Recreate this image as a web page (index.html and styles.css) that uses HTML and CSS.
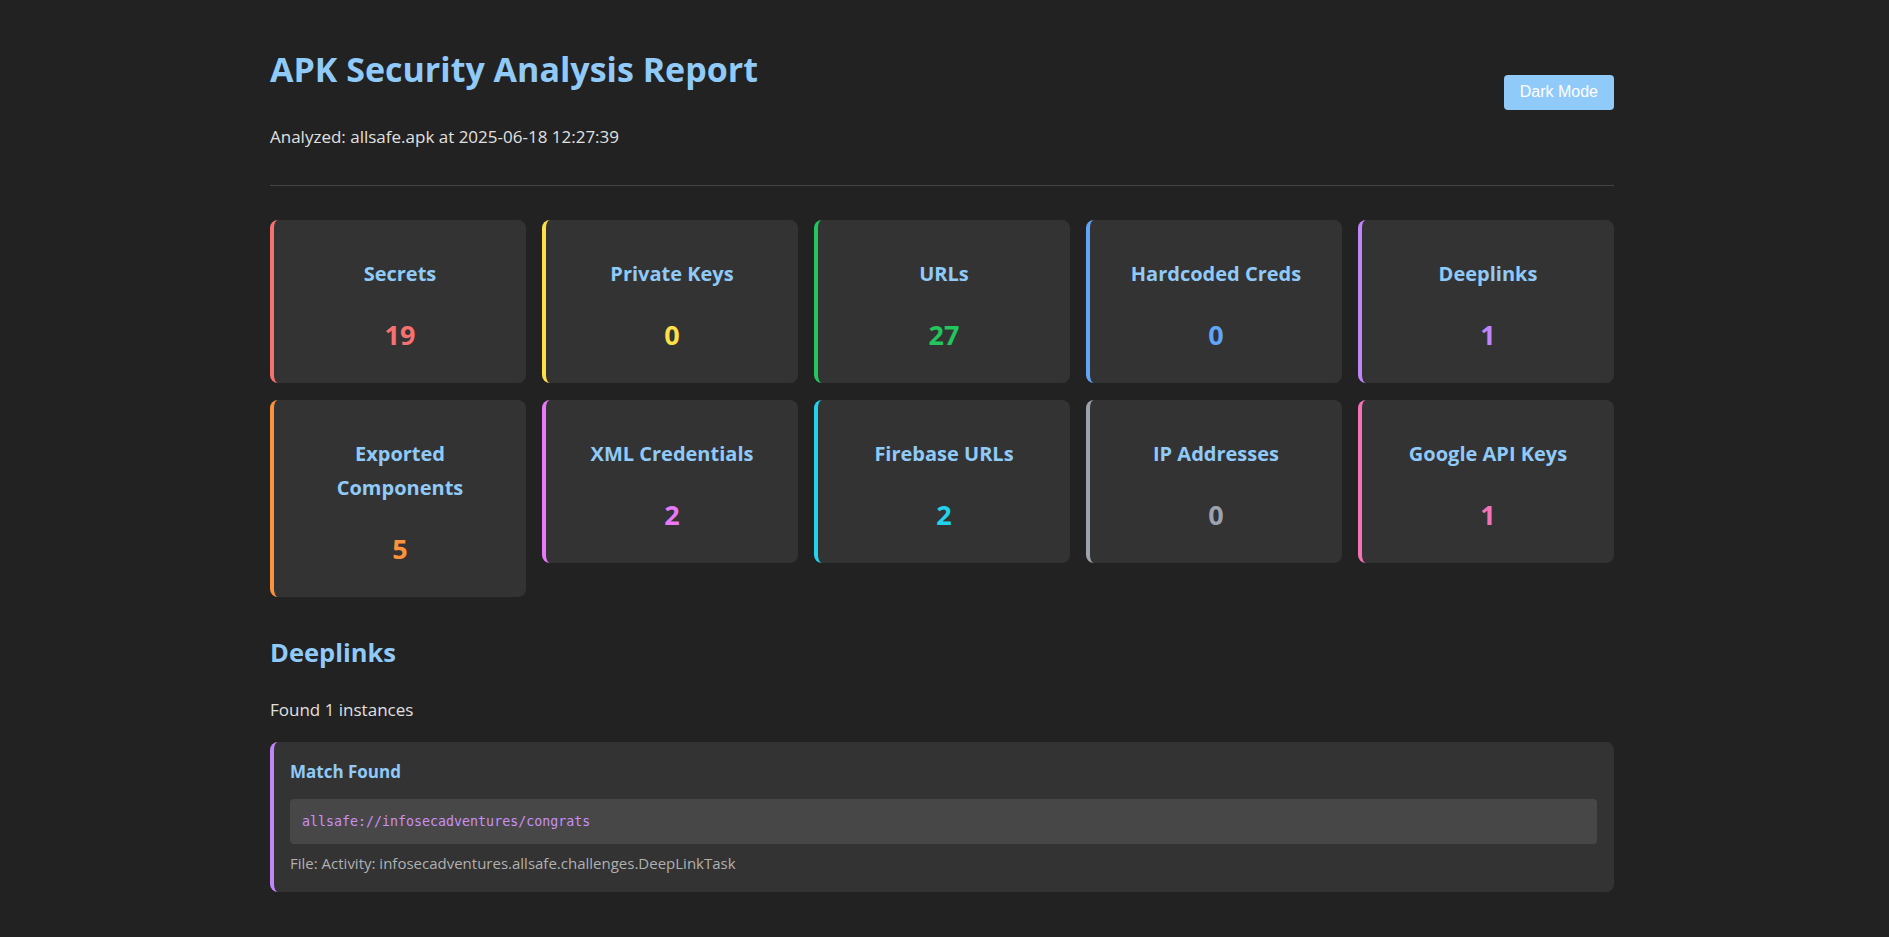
FILE: index.html
```html
<!DOCTYPE html>
<html lang="en">
<head>
<meta charset="utf-8">
<title>APK Security Analysis Report</title>
<link rel="stylesheet" href="styles.css">
</head>
<body>
<div class="container">
  <header class="header">
    <div class="header-text">
      <h1 class="title">APK Security Analysis Report</h1>
      <p class="meta">Analyzed: allsafe.apk at 2025-06-18 12:27:39</p>
    </div>
    <button class="mode-btn">Dark Mode</button>
  </header>

  <section class="stats">
    <div class="card c-red"><h3 class="card-title">Secrets</h3><div class="card-num">19</div></div>
    <div class="card c-yellow"><h3 class="card-title">Private Keys</h3><div class="card-num">0</div></div>
    <div class="card c-green"><h3 class="card-title">URLs</h3><div class="card-num">27</div></div>
    <div class="card c-blue"><h3 class="card-title">Hardcoded Creds</h3><div class="card-num">0</div></div>
    <div class="card c-purple"><h3 class="card-title">Deeplinks</h3><div class="card-num">1</div></div>
    <div class="card c-orange"><h3 class="card-title">Exported Components</h3><div class="card-num">5</div></div>
    <div class="card c-fuchsia"><h3 class="card-title">XML Credentials</h3><div class="card-num">2</div></div>
    <div class="card c-cyan"><h3 class="card-title">Firebase URLs</h3><div class="card-num">2</div></div>
    <div class="card c-gray"><h3 class="card-title">IP Addresses</h3><div class="card-num">0</div></div>
    <div class="card c-pink"><h3 class="card-title">Google API Keys</h3><div class="card-num">1</div></div>
  </section>

  <section class="findings">
    <h2 class="section-title">Deeplinks</h2>
    <p class="count">Found 1 instances</p>
    <div class="match">
      <h4 class="match-title">Match Found</h4>
      <pre class="code">allsafe://infosecadventures/congrats</pre>
      <p class="file">File: Activity: infosecadventures.allsafe.challenges.DeepLinkTask</p>
    </div>
  </section>
</div>
</body>
</html>
```

FILE: styles.css
```css
* { box-sizing: border-box; }

html, body {
  margin: 0;
  padding: 0;
  background: #222222;
}

body {
  color: #e0e0e0;
  font-family: "Open Sans", "Noto Sans", sans-serif;
  font-size: 17px;
  line-height: 1.6;
  padding-right: 5px;
}

.container {
  max-width: 1344px;
  margin: 0 auto;
  padding: 41px 0 40px;
}

.header {
  display: flex;
  justify-content: space-between;
  align-items: center;
  padding-bottom: 36px;
  border-bottom: 1px solid #444444;
  margin-bottom: 34px;
}

.title {
  margin: 0 0 25px;
  font-size: 34px;
  line-height: 57.6px;
  font-weight: 700;
  color: #90caf9;
}

.meta {
  margin: 0;
  font-size: 17px;
  line-height: 25.6px;
}

.mode-btn {
  font-family: "Liberation Sans", Arial, sans-serif;
  font-size: 16px;
  line-height: 18px;
  color: #ffffff;
  background: #90caf9;
  border: none;
  border-radius: 4px;
  padding: 8px 16px 9px;
  margin-top: -6px;
  cursor: pointer;
}

.stats {
  display: grid;
  grid-template-columns: repeat(5, 1fr);
  gap: 17px 16px;
  align-items: start;
}

.card {
  background: #333333;
  border-radius: 8px;
  border-left: 4px solid;
  padding: 20px 20px 25px;
  text-align: center;
}

.card-title {
  margin: 17px 0 0;
  font-size: 20px;
  line-height: 34px;
  font-weight: 700;
  color: #90caf9;
}

.card-num {
  margin-top: 21px;
  font-size: 27px;
  line-height: 46px;
  font-weight: 700;
}

.c-red { border-left-color: #f87171; }
.c-red .card-num { color: #f87171; }
.c-yellow { border-left-color: #fde047; }
.c-yellow .card-num { color: #fde047; }
.c-green { border-left-color: #22c55e; }
.c-green .card-num { color: #22c55e; }
.c-blue { border-left-color: #60a5fa; }
.c-blue .card-num { color: #60a5fa; }
.c-purple { border-left-color: #c084fc; }
.c-purple .card-num { color: #c084fc; }
.c-orange { border-left-color: #fb923c; }
.c-orange .card-num { color: #fb923c; }
.c-fuchsia { border-left-color: #e879f9; }
.c-fuchsia .card-num { color: #e879f9; }
.c-cyan { border-left-color: #22d3ee; }
.c-cyan .card-num { color: #22d3ee; }
.c-gray { border-left-color: #9ca3af; }
.c-gray .card-num { color: #9ca3af; }
.c-pink { border-left-color: #f472b6; }
.c-pink .card-num { color: #f472b6; }

.findings {
  margin-top: 34px;
}

.section-title {
  margin: 0 0 23px;
  font-size: 25.5px;
  line-height: 42.7px;
  font-weight: 700;
  color: #90caf9;
}

.count {
  margin: 0 0 20px;
  font-size: 17px;
  line-height: 25.6px;
}

.match {
  background: #333333;
  border-left: 4px solid #c084fc;
  border-radius: 8px;
  padding: 16px 17px 17px 16px;
}

.match-title {
  margin: 0;
  font-size: 17px;
  line-height: 28px;
  font-weight: 700;
  color: #90caf9;
}

.code {
  margin: 13px 0 8px;
  padding: 12px;
  background: #474747;
  border-radius: 4px;
  font-family: "DejaVu Sans Mono", "Liberation Mono", monospace;
  font-size: 13.3px;
  line-height: 21px;
  color: #c990f5;
  white-space: pre-wrap;
}

.file {
  margin: 0;
  font-size: 15px;
  line-height: 23px;
  color: #b0b0b0;
}
```
